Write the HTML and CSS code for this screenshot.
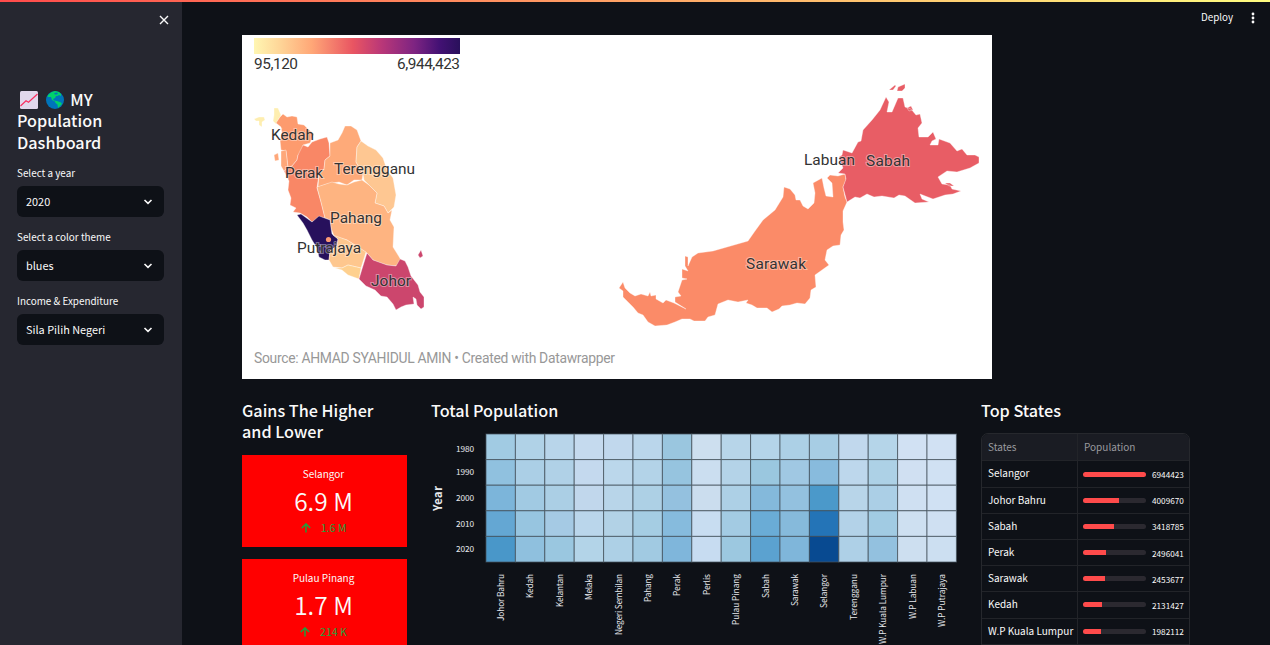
FILE: index.html
```html
<!DOCTYPE html>
<html lang="en">
<head>
<meta charset="utf-8">
<title>MY Population Dashboard</title>
<link rel="stylesheet" href="styles.css">
</head>
<body>
<div class="decoration"></div>
<div class="app">
  <aside class="sidebar">
    <div class="sidebar-head">
      <svg class="close" viewBox="0 0 10 10"><path d="M1 1L9 9M9 1L1 9"/></svg>
    </div>
    <h1 class="title">
      <svg class="emoji" viewBox="0 0 18 18"><rect width="18" height="18" rx="1.5" fill="#e1d8ec"/><path d="M0.5 15L6 9.7L8.5 11.3L17.5 3" fill="none" stroke="#f92f60" stroke-width="1.2"/></svg>
      <svg class="emoji globe" viewBox="0 0 18 18"><circle cx="9" cy="9" r="9" fill="#0074ba"/><path d="M1.500 5Q4 1 9 0L13 1L15 3L15 5L13 4L11.500 5L10 5L9 7L7 8L8 9.500L11 10L15 11.500L16 13L13 16L12 17L11.500 13.500L9.500 12L9 10.500L6 9L5 6L2 6Z" fill="#00d26a"/><path d="M8 2.500L10 1.500L12 2L11 3.500L9 3.500Z" fill="#0074ba"/></svg>
      <span class="my">MY</span><br>Population<br>Dashboard
    </h1>
    <div class="field"><label>Select a year</label><div class="select"><span>2020</span><svg viewBox="0 0 10 6"><path d="M1.5 1L5 4.3L8.5 1"/></svg></div></div>
    <div class="field"><label>Select a color theme</label><div class="select"><span>blues</span><svg viewBox="0 0 10 6"><path d="M1.5 1L5 4.3L8.5 1"/></svg></div></div>
    <div class="field"><label>Income &amp; Expenditure</label><div class="select"><span>Sila Pilih Negeri</span><svg viewBox="0 0 10 6"><path d="M1.5 1L5 4.3L8.5 1"/></svg></div></div>
  </aside>
  <main class="main">
    <header class="toolbar"><span>Deploy</span><svg viewBox="0 0 4 12"><circle cx="2" cy="2" r="1.4"/><circle cx="2" cy="6" r="1.4"/><circle cx="2" cy="10" r="1.4"/></svg></header>
    <svg class="map" viewBox="242 35 750 344">
      <defs><linearGradient id="ramp"><stop offset="0" stop-color="#fff6b2"/><stop offset=".12" stop-color="#fed799"/><stop offset=".28" stop-color="#ffa777"/><stop offset=".48" stop-color="#e95562"/><stop offset=".62" stop-color="#b93778"/><stop offset=".78" stop-color="#7d2482"/><stop offset=".9" stop-color="#431174"/><stop offset="1" stop-color="#29105b"/></linearGradient></defs>
      <rect x="242" y="35" width="750" height="344" fill="#fff"/>
      <rect x="254" y="38" width="206" height="16" fill="url(#ramp)"/>
      <g class="states">
        <path fill="#feeeb0" d="M254 119L259 117L264 117L265 120L262 122L262 127L259 125L259 121L256 121ZM274 108L278 108L281 115L276 124L273 121L274 115Z"/>
        <path fill="#fd9b6e" d="M276 123L280 117L283 114L287 117L292 116L297 117L298 124L304 125L308 129L314 134L310 143L303 145L302 151L298 155L297 160L292 166L288 168L286 151L281 150L280 140L282 133L281 127Z"/>
        <path fill="#fea779" d="M281 151L286 150L288 168L284 171L281 166ZM274 155L278 153L279 160L275 161Z"/>
        <path fill="#f98766" d="M303 145L308 147L312 142L320 139L327 137L329 143L330 156L325 160L324 169L319 174L317 188L321 202L325 218L320 217L312 222L307 217L300 213L293 212L296 208L290 205L291 198L288 190L289 181L284 171L288 168L292 166L297 160L298 155Z"/>
        <path fill="#feaa79" d="M330 143L338 140L342 133L345 126L351 126L357 130L361 141L357 147L356 162L363 174L362 180L354 180L347 185L339 182L327 184L318 187L319 174L324 169L325 160L330 156Z"/>
        <path fill="#fec792" d="M361 141L368 146L376 150L383 158L387 170L393 178L396 195L394 207L388 213L384 206L375 203L377 193L369 185L364 180L363 174L356 162L357 147Z"/>
        <path fill="#feb481" d="M317 187L326 184L332 182L339 184L347 185L354 182L362 180L369 185L377 193L375 203L384 206L388 213L392 210L390 220L394 227L393 247L398 255L401 260L397 266L387 265L378 262L373 260L367 253L347 240L334 236L331 228L330 220L325 218L321 202Z"/>
        <path fill="#27105c" d="M297 215L301 214L312 222L319 216L330 220L331 228L332 234L338 239L337 246L330 251L329 260L325 260L319 257L317 248L312 240L307 230L303 223Z"/>
        <circle cx="328.500" cy="239.500" r="2.600" fill="#fb9975"/>
        <path fill="#fec78e" d="M333 235L347 240L366 252L361 268L348 265L342 268L333 267L329 260L330 251L337 246L338 239Z"/>
        <path fill="#fed08f" d="M335 268L342 268L348 265L361 268L359 279L348 275L342 270Z"/>
        <path fill="#cc466d" d="M367 253L373 260L387 265L396 266L400 259L405 261L408 267L411 276L418 285L420 292L424 297L424 307L421 309L417 305L416 299L413 297L414 304L406 305L401 307L396 310L393 304L387 297L381 296L375 290L366 286L359 279L362 269ZM421 250L423 256L420 258L418 255Z"/>
        <path fill="#fb8b68" d="M623 282L625 288L630 293L635 296L641 294L648 296L650 292L651 296L656 295L656 299L663 303L666 300L674 303L686 309L675 302L675 297L681 296L678 292L682 280L687 279L682 278L682 269L688 271L685 266L685 256L688 257L688 266L692 257L698 253L713 251L748 241L755 231L763 220L775 210L783 197L784 187L790 189L795 195L796 200L800 200L803 206L808 209L814 203L815 193L813 183L822 178L824 188L826 196L833 197L832 183L827 178L830 175L838 176L845 174L846 180L843 187L845 197L847 202L843 211L843 222L844 230L841 235L840 245L833 246L827 250L825 260L829 265L815 275L816 287L811 290L810 298L805 304L797 303L790 305L782 306L779 309L772 312L767 308L757 308L752 305L746 303L748 300L738 302L728 300L718 304L715 315L708 317L705 321L694 321L690 319L682 319L675 322L667 325L655 326L648 322L643 315L638 313L633 307L623 297L623 291L619 288Z"/>
        <path fill="#e85d65" d="M843 150L852 153L858 142L861 141L863 130L872 120L880 110L886 97L889 102L887 112L892 112L898 98L903 98L905 107L911 109L916 115L920 114L922 123L918 128L919 137L928 137L933 132L936 139L932 141L930 145L938 145L939 139L950 143L957 151L962 149L967 155L975 155L979 157L979 163L970 168L957 172L947 171L938 177L942 184L950 185L952 189L961 191L953 194L945 195L933 199L920 194L922 199L929 202L915 203L905 196L899 195L894 198L882 196L874 197L867 194L860 198L855 197L847 202L843 187L846 179L845 174L838 173L843 168L839 157L842 155ZM897 91L898 87L905 84L905 88L902 91ZM889 90L895 85L896 86L893 90ZM907 108L911 106L913 110L909 111ZM945 183L950 183L954 186L949 186Z"/>
      </g>
      <g class="map-label">
        <text x="254" y="69" textLength="44">95,120</text><text x="397" y="69" textLength="63">6,944,423</text>
        <text x="271" y="140" textLength="43">Kedah</text><text x="285" y="178" textLength="38">Perak</text><text x="334" y="174" textLength="81">Terengganu</text><text x="330" y="223" textLength="52">Pahang</text><text x="297" y="253" textLength="64">Putrajaya</text><text x="371" y="286" textLength="40">Johor</text><text x="804" y="165" textLength="51">Labuan</text><text x="866" y="166" textLength="44">Sabah</text><text x="746" y="269" textLength="60">Sarawak</text>
      </g>
      <text class="source" x="254" y="363" textLength="361">Source: AHMAD SYAHIDUL AMIN • Created with Datawrapper</text>
    </svg>
    <div class="columns">
      <section class="gains">
        <h2>Gains The Higher<br>and Lower</h2>
        <div class="metric"><div class="metric-label">Selangor</div><div class="metric-value">6.9 M</div><div class="metric-delta"><svg viewBox="0 0 10 10"><path d="M5 9.5V1M0.8 5L5 0.9L9.2 5"/></svg><span>1.6 M</span></div></div>
        <div class="metric"><div class="metric-label">Pulau Pinang</div><div class="metric-value">1.7 M</div><div class="metric-delta"><svg viewBox="0 0 10 10"><path d="M5 9.5V1M0.8 5L5 0.9L9.2 5"/></svg><span>214 K</span></div></div>
      </section>
      <section class="population">
        <h2>Total Population</h2>
        <svg class="heatmap" id="heatmap" viewBox="431 430 526 215"></svg>
      </section>
      <section class="top">
        <h2>Top States</h2>
        <div class="table" id="table"><div class="row head"><span>States</span><span>Population</span></div></div>
      </section>
    </div>
  </main>
</div>
<script src="app.js"></script>
</body>
</html>
```
FILE: styles.css
```css
* { box-sizing: border-box; }
body { margin: 0; height: 645px; overflow: hidden; background: #0e1117; color: #fafafa; font-family: "Noto Sans CJK SC", "Open Sans", sans-serif; font-size: 11px; display: flex; flex-direction: column; }
.decoration { height: 2px; flex: none; background: linear-gradient(90deg, #ff4b4b, #fffd80); }
.app { display: flex; height: 643px; }
.sidebar { width: 182px; flex: none; background: #262730; padding: 0 18px 0 17px; }
.sidebar-head { height: 87px; padding-top: 13px; display: flex; justify-content: flex-end; align-items: flex-start; margin-right: -5px; }
.close { width: 10px; height: 10px; fill: none; stroke: #fafafa; stroke-width: 1.4; }
.title { margin: 0 0 12px; font-size: 16.2px; line-height: 21.4px; font-weight: 500; white-space: nowrap; }
.emoji { width: 18px; height: 18px; margin-left: 3px; vertical-align: -3px; }
.globe { margin-left: 4px; }
.my { margin-left: 3px; }
.field { height: 63.8px; }
.field label { display: block; height: 21px; font-size: 9.900px; line-height: 16px; white-space: nowrap; }
.select { height: 31px; border-radius: 6px; background: #0e1117; display: flex; align-items: center; justify-content: space-between; padding: 0 11px 1px 9px; font-size: 10.900px; }
.select svg { width: 10px; height: 6px; margin-top: 2px; fill: none; stroke: #fafafa; stroke-width: 1.6; }
.main { flex: 1; padding-left: 60px; }
.toolbar { height: 33px; display: flex; justify-content: flex-end; align-items: flex-start; gap: 18px; padding: 7px 15px 0 0; font-size: 9.800px; line-height: 16px; }
.toolbar svg { width: 4px; height: 12px; margin-top: 3px; fill: #fafafa; }
.map { display: block; width: 750px; height: 344px; }
.states path { stroke: #fff; stroke-opacity: .5; stroke-width: .7; stroke-linejoin: round; }
.map-label { font: 15.400px Roboto, sans-serif; fill: #333; stroke: #fff; stroke-opacity: .4; stroke-width: 2px; paint-order: stroke; }
.source { font: 13.900px Roboto, sans-serif; fill: #989898; }
.columns { display: grid; grid-template-columns: 165px 526px 209px; gap: 24px; padding-top: 21px; }
h2 { margin: 0; font-size: 16.2px; line-height: 21.4px; font-weight: 500; white-space: nowrap; }
.gains h2 { margin-bottom: 12px; }
.metric { height: 92px; margin-bottom: 12px; padding: 10px 2px 0 0; background: red; text-align: center; }
.metric-label { font-size: 10px; line-height: 17px; }
.metric-value { font-size: 24.500px; line-height: 38px; font-weight: 350; }
.metric-delta { display: flex; justify-content: center; align-items: center; gap: 10px; color: #1da03c; font-size: 10.600px; line-height: 16px; }
.metric-delta svg { width: 10px; height: 10px; fill: none; stroke: currentColor; stroke-width: 1.5; }
.heatmap { display: block; width: 526px; height: 215px; margin-top: 9px; }
.heatmap rect { stroke: #47545e; stroke-width: 1; stroke-opacity: .75; }
.heatmap text { fill: #e6e8ec; font-size: 8.300px; }
.heatmap .axis { font-size: 11px; font-weight: 700; }
.table { margin-top: 12px; border: 1px solid #26282d; border-radius: 7px 7px 0 0; overflow: hidden; height: 226px; }
.row { display: grid; grid-template-columns: 96px 1fr; height: 26.200px; line-height: 24px; border-bottom: 1px solid #222429; white-space: nowrap; font-size: 10px; }
.row > * { padding-left: 6px; }
.row > :first-child { border-right: 1px solid #222429; }
.head { background: #1a1c23; color: #999a9e; height: 27px; line-height: 26px; }
.row .meter { display: flex; align-items: center; gap: 6px; padding-left: 5px; font-size: 8.200px; }
.track { width: 63px; height: 5px; border-radius: 3px; background: #2b2930; overflow: hidden; }
.bar { height: 5px; background: #ff4b4b; }
```
FILE: app.js
```js
const states = [
  ["Johor Bahru", 47, "#a1cbe3 #90c1df #7cb5da #64a7d3 #4997c9"],
  ["Kedah", 24, "#b0d2e7 #abcfe6 #a1cae3 #97c5e0 #8fc0de"],
  ["Kelantan", 33, "#b8d5ea #b0d1e7 #abcfe5 #a5cae4 #9ac7e0"],
  ["Melaka", 26, "#c5daee #c4d9ee #c1d7ec #bad6eb #b3d4e8"],
  ["Negeri Sembilan", 61, "#c1d8ed #bbd7eb #b8d5e9 #b2d2e6 #add0e6"],
  ["Pahang", 28, "#bad6eb #b3d3e8 #add0e5 #a5cde3 #a1cae2"],
  ["Perak", 22, "#9ac6df #96c4df #94c1df #86bbdd #7fb6db"],
  ["Perlis", 21, "#cddfef #cbdef0 #cbddee #c8ddf1 #c7dcf1"],
  ["Pulau Pinang", 51, "#b7d5e9 #b4d3e8 #add0e6 #a3cbe3 #9cc8e0"],
  ["Sabah", 24, "#b4d4e9 #9ac7df #84b9db #6aacd6 #5ba2d0"],
  ["Sarawak", 32, "#acd0e6 #a0c8e3 #93c1df #86badb #7fb6da"],
  ["Selangor", 34, "#a7cde4 #88bbdd #4b99ca #2474b7 #084a91"],
  ["Terengganu", 46, "#c1d8ed #bdd7ec #b8d5e9 #b3d2e8 #aed0e7"],
  ["W.P Kuala Lumpur", 70, "#b5d5e9 #add1e6 #abcfe6 #a1cbe3 #93c1df"],
  ["W.P Labuan", 45, "#d1e1f3 #d0e0f2 #cfe0f2 #cee0f1 #cddff0"],
  ["W.P Putrajaya", 53, "#d1e1f3 #d0e1f3 #d0e1f3 #cfe0f2 #ccdff1"]
];
const cellW = 29.4, cellH = 25.6;
let chart = '<text class="axis" transform="translate(442 511) rotate(-90)" textLength="25">Year</text>';
[1980, 1990, 2000, 2010, 2020].forEach((year, i) => {
  chart += `<text x="456" y="${[452, 475, 501, 527, 552][i]}" textLength="18">${year}</text>`;
});
states.forEach(([name, len, colors], c) => {
  colors.split(" ").forEach((fill, r) => {
    chart += `<rect x="${486 + c * cellW}" y="${434 + r * cellH}" width="${cellW}" height="${cellH}" fill="${fill}"/>`;
  });
  chart += `<text transform="translate(${504 + c * cellW} 574) rotate(-90)" text-anchor="end" textLength="${len}">${name}</text>`;
});
document.getElementById("heatmap").innerHTML = chart;

const top7 = [["Selangor", 6944423], ["Johor Bahru", 4009670], ["Sabah", 3418785], ["Perak", 2496041], ["Sarawak", 2453677], ["Kedah", 2131427], ["W.P Kuala Lumpur", 1982112]];
document.getElementById("table").insertAdjacentHTML("beforeend", top7.map(([name, n]) =>
  `<div class="row"><span>${name}</span><div class="meter"><div class="track"><div class="bar" style="width:${n / 69444.23}%"></div></div><span>${n}</span></div></div>`).join(""));
```
